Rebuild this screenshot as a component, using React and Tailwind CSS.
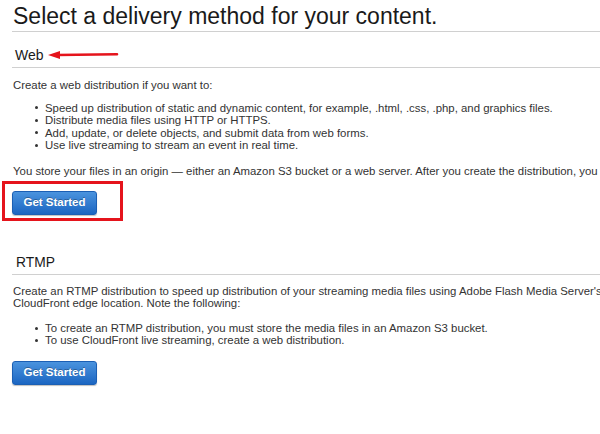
import React from 'react';

// bouton bleu façon console AWS
function GetStarted() {
  return (
    <button className="h-[24px] w-[85px] rounded-[3px] border border-[#1b5fb4] bg-gradient-to-b from-[#4a93de] to-[#1b66c2] text-[11.5px] font-bold leading-none text-white shadow-[0_1px_1px_rgba(0,0,0,0.25)] [text-shadow:0_-1px_0_rgba(0,0,0,0.3)]">
      Get Started
    </button>
  );
}

function Bullets({ items }) {
  return (
    <ul className="pl-[22px]">
      {items.map((t) => (
        <li key={t} className="flex items-center whitespace-nowrap">
          <span className="mr-[7px] h-[3px] w-[3px] shrink-0 rounded-full bg-[#333]"></span>
          {t}
        </li>
      ))}
    </ul>
  );
}

export default function App() {
  return (
    <div className="h-[434px] w-[600px] overflow-hidden bg-white pl-[12px] font-['Liberation_Sans',Arial,sans-serif] text-[#333]">
      {/* Titre */}
      <h1 className="border-b border-[#d0d0d0] pb-[1px] pl-[1px] pt-[2px] text-[23px] leading-[28px] text-[#1a1a1a]">
        Select a delivery method for your content.
      </h1>

      {/* --- Web --- */}
      <div className="flex items-center border-b border-[#d0d0d0] pb-[4px] pl-[3px] pt-[15px] text-[14px] leading-[16px] text-[#1a1a1a]">
        <span>Web</span>
        <svg width="72" height="10" viewBox="0 0 72 10" className="ml-[4px] mt-[-1px]">
          <path d="M0 5 L12 1 L12 9 Z" fill="#e5141c" />
          <path d="M9 5 L69 4.3" stroke="#e5141c" strokeWidth="2.6" strokeLinecap="round" />
        </svg>
      </div>

      <div className="pl-[1px] text-[11.4px] leading-[12.5px]">
        <p className="mt-[11px]">Create a web distribution if you want to:</p>
        <div className="mt-[10px]">
          <Bullets
            items={[
              'Speed up distribution of static and dynamic content, for example, .html, .css, .php, and graphics files.',
              'Distribute media files using HTTP or HTTPS.',
              'Add, update, or delete objects, and submit data from web forms.',
              'Use live streaming to stream an event in real time.',
            ]}
          />
        </div>
        <p className="mt-[13px] whitespace-nowrap">
          You store your files in an origin — either an Amazon S3 bucket or a web server. After you create the distribution, you can add more origins to the distribution.
        </p>
      </div>

      <div className="relative mt-[12px] w-fit">
        <GetStarted />
        {/* encadré rouge d'annotation */}
        <div className="pointer-events-none absolute left-[-10px] top-[-8px] h-[40px] w-[121px] border-[3px] border-[#e5141c]"></div>
      </div>

      {/* --- RTMP --- */}
      <div className="mt-[40px] border-b border-[#d0d0d0] pb-[3px] pl-[4px] text-[13.8px] leading-[16px] text-[#1a1a1a]">
        RTMP
      </div>

      <div className="pl-[1px] text-[11.4px] leading-[12.5px]">
        <p className="mt-[10px] whitespace-nowrap">
          Create an RTMP distribution to speed up distribution of your streaming media files using Adobe Flash Media Server's RTMP protocol. An RTMP distribution allows an end user to begin playing a media file before the file has finished downloading from a
          <br />
          CloudFront edge location. Note the following:
        </p>
        <div className="mt-[12px]">
          <Bullets
            items={[
              'To create an RTMP distribution, you must store the media files in an Amazon S3 bucket.',
              'To use CloudFront live streaming, create a web distribution.',
            ]}
          />
        </div>
      </div>

      <div className="mt-[12px]">
        <GetStarted />
      </div>
    </div>
  );
}
